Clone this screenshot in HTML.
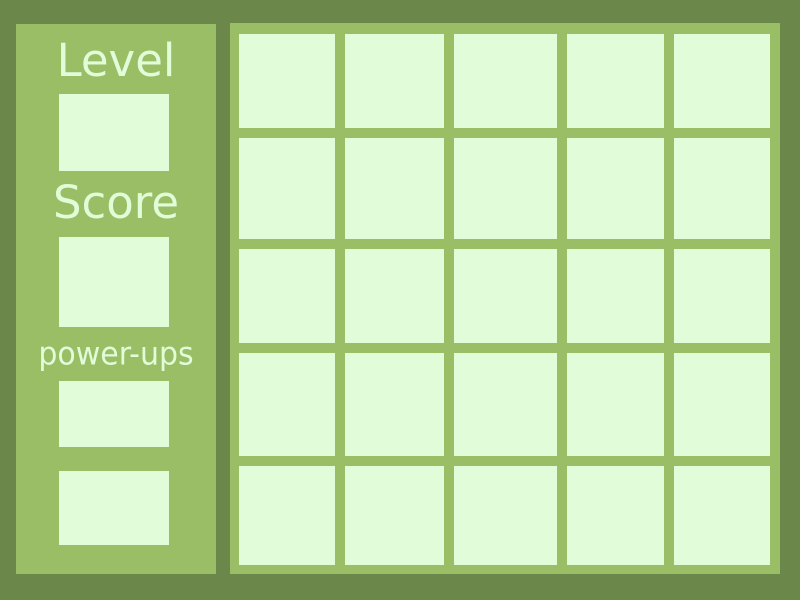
<!DOCTYPE html>
<html><head><style>
body{margin:0;width:800px;height:600px;background:#6b8749;position:relative;overflow:hidden;font-family:"DejaVu Sans",sans-serif;color:#e0fcd8}
div{position:absolute}
.p{background:#99be66}
.c{background:#e0fcd8}
.t{left:16px;width:200px;text-align:center;line-height:1}
</style></head><body>
<div class="p" style="left:16px;top:24px;width:200px;height:550px"></div>
<div class="p" style="left:230px;top:23px;width:550px;height:551px"></div>
<div class="t" style="top:38px;font-size:45px">Level</div>
<div class="t" style="top:180px;font-size:45px">Score</div>
<div class="t" style="top:340px;font-size:30px;transform:scaleY(1.08)">power-ups</div>
<div class="c" style="left:59px;top:94px;width:110px;height:77px"></div>
<div class="c" style="left:59px;top:237px;width:110px;height:90px"></div>
<div class="c" style="left:59px;top:381px;width:110px;height:66px"></div>
<div class="c" style="left:59px;top:471px;width:110px;height:74px"></div>
<div id="g"></div>
<script>
var xs=[[239,335],[345,444],[454,557],[567,664],[674,770]];
var ys=[[34,128],[138,239],[249,343],[353,456],[466,565]];
var h='';
ys.forEach(function(y){xs.forEach(function(x){h+='<div class="c" style="left:'+x[0]+'px;top:'+y[0]+'px;width:'+(x[1]-x[0])+'px;height:'+(y[1]-y[0])+'px"></div>';});});
document.getElementById('g').outerHTML=h;
</script>
</body></html>
